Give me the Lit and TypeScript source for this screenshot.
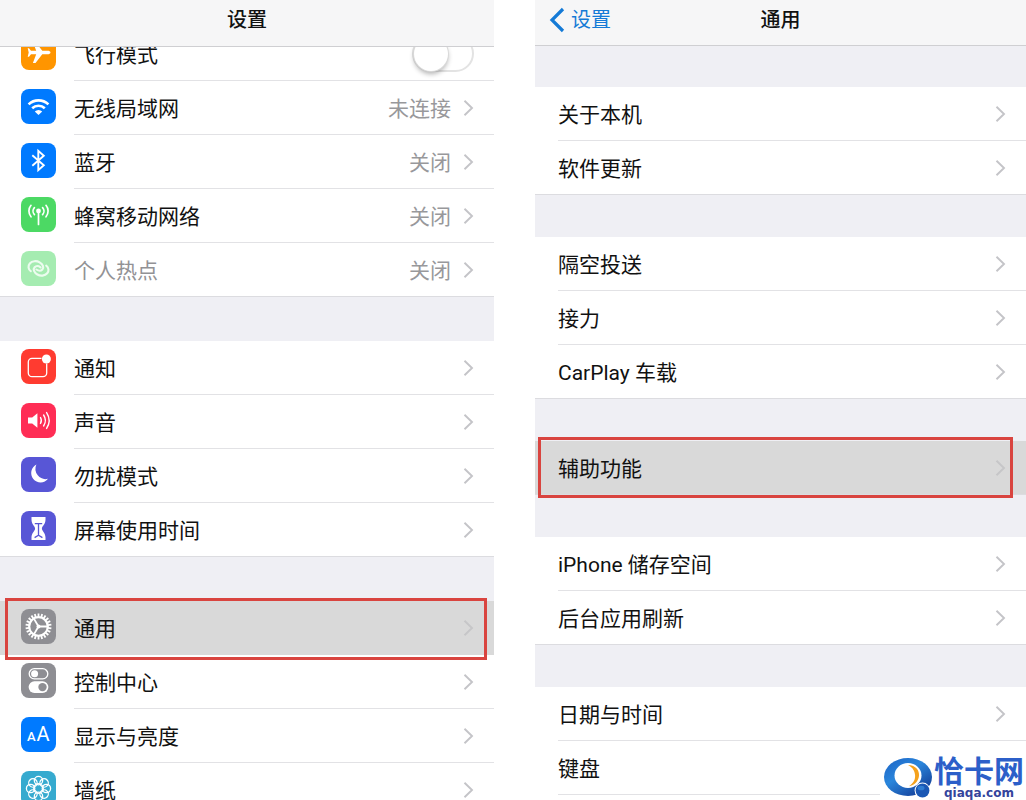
import { LitElement, html, svg, css, nothing, TemplateResult } from "lit";
import { customElement, property } from "lit/decorators.js";
import { classMap } from "lit/directives/class-map.js";

interface Item {
  label: string;
  icon?: string;
  value?: string;
  toggle?: boolean;
  disabled?: boolean;
  active?: boolean;
}

const gearTeeth = Array.from({ length: 22 }, (_, i) => (i * 360) / 22);
const petals = Array.from({ length: 8 }, (_, i) => i * 45);

const glyphs: Record<string, TemplateResult> = {
  plane: svg`<path fill="#fff" d="M29.500 17.500c0-1.200-1.400-1.800-3-1.800h-5.200L14.500 7h-2.600l3.300 8.700H10l-2-2.400H6.700l1 4.200-1 4.200H8l2-2.400h5.200L11.900 28h2.600l6.800-8.700h5.200c1.600 0 3-.6 3-1.800z"/>`,
  wifi: svg`<g fill="none" stroke="#fff" stroke-width="2.600"><path d="M7.600 15.400a14.200 14.200 0 0 1 19.800 0"/><path d="M11.200 19.300a9 9 0 0 1 12.600 0"/></g><path fill="#fff" d="M13.800 22.400a5.300 5.300 0 0 1 7.400 0L17.500 26z"/>`,
  bluetooth: svg`<path fill="none" stroke="#fff" stroke-width="1.900" d="M11.300 12.200l11.500 10-5.500 5V7.800l5.500 5-11.500 10"/>`,
  cellular: svg`<g fill="none" stroke="#fff" stroke-width="1.700" stroke-linecap="round"><path d="M17.500 14v13.500"/><path d="M13.400 10.600a5.200 5.200 0 0 0 0 7M21.600 10.600a5.200 5.200 0 0 1 0 7M10 8.300a9 9 0 0 0 0 11.500M25 8.300a9 9 0 0 1 0 11.500"/></g><circle cx="17.500" cy="14" r="2.400" fill="#fff"/>`,
  hotspot: svg`<g fill="none" stroke="#ecfcef" stroke-width="2.100" stroke-linecap="round"><path d="M9.800 20.200C7.200 18.400 6.800 14.800 8.800 12.500c2.300-2.700 6.800-3 9.800-1.200 3.400 2 4.600 5.200 2.800 7.200-1.500 1.600-4 1.400-6 0"/><path d="M25.200 14.600c2.600 1.800 3 5.400 1 7.700-2.300 2.700-6.800 3-9.800 1.200-3.400-2-4.600-5.200-2.800-7.200 1.500-1.600 4-1.400 6 0"/></g>`,
  notice: svg`<path fill="none" stroke="#fff" stroke-width="1.300" d="M20.500 9.300H11A3.700 3.700 0 0 0 7.300 13v11a3.700 3.700 0 0 0 3.700 3.700h11a3.700 3.700 0 0 0 3.700-3.700v-9.500"/><circle cx="25.400" cy="10" r="4.500" fill="#fff"/>`,
  sound: svg`<path fill="#fff" d="M7 14.500h4.200l5.200-4.200v14.400l-5.200-4.200H7z"/><g fill="none" stroke="#fff" stroke-width="1.400" stroke-linecap="round"><path d="M19.500 14.500a6 6 0 0 1 0 6"/><path d="M22.600 12a10 10 0 0 1 0 11"/><path d="M25.600 9.600a14.500 14.500 0 0 1 0 15.800"/></g>`,
  moon: svg`<path fill="#fff" d="M15.400 7.600a9.400 9.400 0 1 0 11.600 14.200A10.200 10.200 0 0 1 15.400 7.600z"/>`,
  hourglass: svg`<path fill="#fff" d="M10.500 6h14v2.400c0 5-3.600 6.500-3.600 9.100s3.600 4.100 3.600 9.100V29h-14v-2.400c0-5 3.600-6.500 3.600-9.100s-3.600-4.100-3.600-9.100z"/><path fill="none" stroke="#5856d6" stroke-width="1.300" d="M13.800 12.700h7.400M17.500 13v12M13.600 26.600l3.900-2.400 3.900 2.400"/>`,
  gear: svg`<g fill="none" stroke="#fff"><circle cx="17.500" cy="17.500" r="9.300" stroke-width="2.200"/><g stroke-width="1.800">${gearTeeth.map((a) => svg`<path d="M17.500 8V4.500" transform="rotate(${a} 17.500 17.500)"/>`)}</g><path stroke-width="1.800" d="M17.500 17.500h9M17.500 17.500l-4.600-7.900M17.500 17.500l-4.600 7.900"/></g><circle cx="17.500" cy="17.500" r="2" fill="#fff"/>`,
  control: svg`<rect x="8.200" y="5.700" width="18.600" height="10.200" rx="5.100" fill="none" stroke="#fff" stroke-width="1.300"/><circle cx="13.600" cy="10.800" r="3.500" fill="#fff"/><rect x="7.600" y="18.300" width="19.800" height="11.600" rx="5.800" fill="#fff"/><circle cx="21.500" cy="24.100" r="4.200" fill="#8e8e93"/>`,
  display: svg`<text x="6" y="23.500" font-size="13" font-weight="500" fill="#fff">A</text><text x="15.500" y="23.500" font-size="20" fill="#fff">A</text>`,
  wallpaper: svg`<g fill="none" stroke="#fff" stroke-width="1.300">${petals.map((a) => svg`<circle cx="17.500" cy="9.600" r="4.200" transform="rotate(${a} 17.500 17.500)"/>`)}<circle cx="17.500" cy="17.500" r="4.800"/></g>`,
};

@customElement("settings-panel")
export class SettingsPanel extends LitElement {
  @property() heading = "";
  @property() back = "";
  @property({ attribute: false }) groups: Item[][] = [];
  @property({ type: Boolean, reflect: true }) detail = false;

  static styles = css`
    :host {
      display: flex; flex-direction: column; min-width: 0; height: 100%;
      overflow: hidden; background: #efeff4;
    }
    header {
      position: relative; z-index: 2; box-sizing: border-box; flex: none; height: 47px;
      display: grid; grid-template-columns: 1fr auto 1fr; align-items: center;
      padding: 0 14px 6px; background: #f6f6f7; border-bottom: 1px solid #cfcfd2;
    }
    :host([detail]) header { height: 46px; }
    h1 { grid-column: 2; margin: 0; font-size: 20px; line-height: 24px; font-weight: 500; }
    .back {
      grid-column: 1; justify-self: start; display: flex; align-items: center; gap: 6px;
      color: #147ad6; font-size: 20px; line-height: 24px; text-decoration: none;
    }
    .back svg { width: 16px; height: 26px; }
    .groups { flex: 1 0 auto; display: flex; flex-direction: column; gap: 44px; margin-top: -20px; }
    :host([detail]) .groups { gap: 42px; margin-top: 41px; }
    ul { list-style: none; margin: 0; padding: 0; background: #fff; }
    ul:last-child { flex: 1 0 auto; }
    .row {
      position: relative; box-sizing: border-box; width: 100%; height: 54px;
      display: flex; align-items: stretch; gap: 18px; padding: 0 0 0 21px;
      font: inherit; text-align: left; color: #111; background: none; border: 0;
      text-decoration: none;
    }
    :host([detail]) .row { padding-left: 23px; }
    .icon { flex: none; width: 35px; height: 35px; margin-top: 8px; border-radius: 8px; }
    .icon svg { display: block; width: 35px; height: 35px; }
    .body {
      flex: 1; min-width: 0; display: flex; align-items: center; gap: 12px;
      padding-right: 20px; border-bottom: 1px solid #e2e2e5;
    }
    ul:not(:last-child) li:last-child .body { border-color: transparent; }
    ul:not(:last-child) li:last-child .row { box-shadow: inset 0 -1px #dcdce0; }
    .label { flex: 1; padding-top: 2px; white-space: nowrap; }
    .value { padding-top: 2px; color: #98989b; }
    .chevron { flex: none; width: 11px; height: 18px; }
    .chevron path { stroke: #c4c4c8; }
    .disabled { color: #929295; }
    .row.active { z-index: 1; background: #d9d9d9; }
    .row.active .body { border-color: transparent; }
    .active .chevron path { stroke: #c6c6c8; }
    .active::after {
      content: ""; position: absolute; inset: -3px 7px -5px 5px;
      border: 3px solid #d9443f; pointer-events: none;
    }
    :host([detail]) .active::after { inset: -4px 13px -3px 3px; }
    .switch {
      appearance: none; box-sizing: border-box; width: 62px; height: 37px; margin: 0;
      border: 2px solid #e3e3e3; border-radius: 19px; background: #fff;
    }
    .switch::before {
      content: ""; display: block; width: 34px; height: 34px; border-radius: 50%;
      background: #fff; box-shadow: 0 0 0 1px #d9d9d9, 0 3px 5px #0000004d;
    }
    .plane { background: #ff9500; }
    .wifi, .bluetooth, .display { background: #007aff; }
    .cellular { background: #4cd964; }
    .hotspot { background: #a5ecb1; }
    .notice { background: #ff3b30; }
    .sound { background: #ff2d55; }
    .moon, .hourglass { background: #5856d6; }
    .gear, .control { background: #8e8e93; }
    .wallpaper { background: #36aacf; }
  `;

  private renderIcon(name?: string) {
    if (!name) return nothing;
    return html`<span class="icon ${name}"><svg viewBox="0 0 35 35" aria-hidden="true">${glyphs[name]}</svg></span>`;
  }

  private renderItem(item: Item) {
    if (item.toggle) {
      return html`<li><label class="row">${this.renderIcon(item.icon)}
        <span class="body"><span class="label">${item.label}</span><input class="switch" type="checkbox" role="switch" /></span>
      </label></li>`;
    }
    return html`<li><button type="button" class=${classMap({ row: true, active: !!item.active })}>
      ${this.renderIcon(item.icon)}
      <span class="body">
        <span class=${classMap({ label: true, disabled: !!item.disabled })}>${item.label}</span>
        ${item.value ? html`<span class="value">${item.value}</span>` : nothing}
        <svg class="chevron" viewBox="0 0 11 18" aria-hidden="true"><path d="M1.500 1.800L9 9l-7.500 7.200" fill="none" stroke-width="1.900"/></svg>
      </span>
    </button></li>`;
  }

  render() {
    return html`
      <header>
        ${this.back
          ? html`<a class="back" href="#settings"><svg viewBox="0 0 16 26" aria-hidden="true"><path d="M14 2L3 13l11 11" fill="none" stroke="#147ad6" stroke-width="3.200"/></svg>${this.back}</a>`
          : nothing}
        <h1>${this.heading}</h1>
      </header>
      <div class="groups">${this.groups.map((g) => html`<ul>${g.map((i) => this.renderItem(i))}</ul>`)}</div>
    `;
  }
}

@customElement("app-root")
export class AppRoot extends LitElement {
  static styles = css`
    :host {
      position: relative; display: grid; grid-template-columns: 494fr 491fr; column-gap: 41px;
      grid-template-rows: 100%; height: 100vh; overflow: hidden; background: #fff; color: #111;
      font-family: Roboto, "Noto Sans CJK SC", sans-serif; font-size: 21px; line-height: 28px;
    }
    .brand {
      position: absolute; right: 0; bottom: 0; z-index: 3; display: flex; align-items: center;
      padding: 0 2px 1px 4px; background: #fff; color: #2c5fc9;
    }
    .brand svg { width: 50px; height: 42px; }
    .words { display: flex; flex-direction: column; }
    .name { font-size: 30px; line-height: 30px; font-weight: 700; }
    .site { font: 700 12px/12px "DejaVu Sans", sans-serif; color: #34449c; text-align: center; }
  `;

  private main: Item[][] = [
    [
      { label: "飞行模式", icon: "plane", toggle: true },
      { label: "无线局域网", icon: "wifi", value: "未连接" },
      { label: "蓝牙", icon: "bluetooth", value: "关闭" },
      { label: "蜂窝移动网络", icon: "cellular", value: "关闭" },
      { label: "个人热点", icon: "hotspot", value: "关闭", disabled: true },
    ],
    [
      { label: "通知", icon: "notice" },
      { label: "声音", icon: "sound" },
      { label: "勿扰模式", icon: "moon" },
      { label: "屏幕使用时间", icon: "hourglass" },
    ],
    [
      { label: "通用", icon: "gear", active: true },
      { label: "控制中心", icon: "control" },
      { label: "显示与亮度", icon: "display" },
      { label: "墙纸", icon: "wallpaper" },
    ],
  ];

  private general: Item[][] = [
    [{ label: "关于本机" }, { label: "软件更新" }],
    [{ label: "隔空投送" }, { label: "接力" }, { label: "CarPlay 车载" }],
    [{ label: "辅助功能", active: true }],
    [{ label: "iPhone 储存空间" }, { label: "后台应用刷新" }],
    [{ label: "日期与时间" }, { label: "键盘" }],
  ];

  render() {
    return html`
      <settings-panel heading="设置" .groups=${this.main}></settings-panel>
      <settings-panel detail heading="通用" back="设置" .groups=${this.general}></settings-panel>
      <div class="brand">
        <svg viewBox="0 0 50 42" aria-hidden="true">
          <defs>
            <linearGradient id="ring" x1="0" y1="0" x2="0.800" y2="1">
              <stop offset="0" stop-color="#1c62c4"/><stop offset="0.450" stop-color="#2a86dc"/><stop offset="1" stop-color="#123a94"/>
            </linearGradient>
          </defs>
          <ellipse cx="24" cy="20" rx="24" ry="19" fill="url(#ring)"/>
          <ellipse cx="24" cy="18.500" rx="13.500" ry="12.500" fill="#fff"/>
          <path fill="#f5a21c" d="M24 8c8 .3 11.500 5.500 11 10.700-.5 5.500-4.500 9.500-10 10.500 4.500-3 6.300-6.500 6.100-10.700C30.900 14.500 29 10.500 24 8z"/>
          <circle cx="38.500" cy="33.500" r="7.900" fill="#fff"/>
          <circle cx="38.500" cy="33.500" r="6.900" fill="#1a57b4"/>
          <ellipse cx="37" cy="31" rx="3.500" ry="2.300" fill="#2f7dd2"/>
        </svg>
        <div class="words"><span class="name">恰卡网</span><span class="site">qiaqa.com</span></div>
      </div>
    `;
  }
}
